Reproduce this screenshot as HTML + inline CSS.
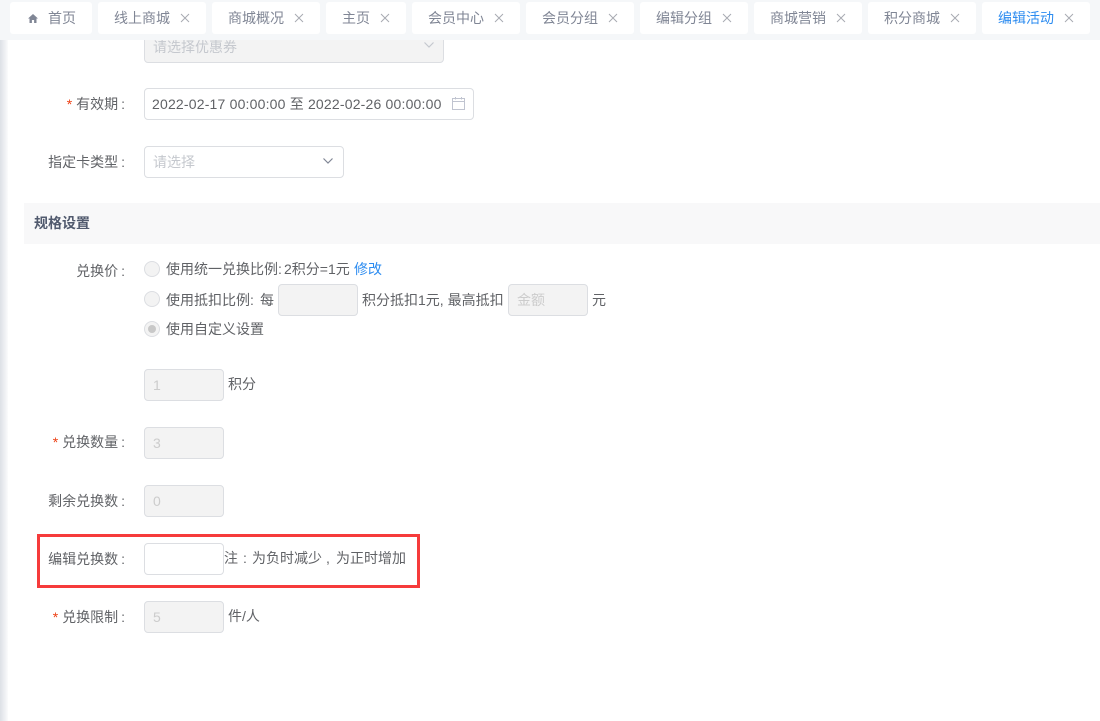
<!DOCTYPE html>
<html lang="zh">
<head>
<meta charset="utf-8">
<style>
html,body{margin:0;padding:0;width:1100px;height:721px;overflow:hidden;background:#fff}
body{position:relative;font-family:"Liberation Sans","Noto Sans CJK SC",sans-serif;font-size:14px;color:#606266}
.a{position:absolute;white-space:nowrap;line-height:20px}
.bar{position:absolute;left:0;top:0;width:1100px;height:40px;background:#f5f7f9}
.tab{position:absolute;top:2px;height:32px;background:#fff;border-radius:3px;color:#808695;font-size:14px;line-height:33px}
.tab span{position:absolute;left:16px;top:0;white-space:nowrap}
.tab svg{position:absolute;top:11px;right:16px}
.in{position:absolute;box-sizing:border-box;border:1px solid #dcdee2;border-radius:4px;height:32px;background:#fff;line-height:30px;padding-left:8px;white-space:nowrap}
.dis{background:#f3f3f3;color:#ccc}
.ph{color:#c5c8ce}
.r{position:absolute;left:144px;width:16px;height:16px;box-sizing:border-box;border:1px solid #dcdee2;border-radius:50%;background:#f3f3f3}
.star{color:#ed4014;font-family:"Liberation Sans",sans-serif}
.lab{position:absolute;right:975px;white-space:nowrap;line-height:20px}
.c{margin-left:3px}
</style>
</head>
<body>
<div class="a" style="left:0;top:40px;width:8px;height:681px;background:linear-gradient(to right,#dde0e6,#eef0f3 60%,#fbfbfc)"></div>
<div class="bar"></div>

<div class="tab" style="left:10px;width:82px">
<svg style="left:18px;top:12px;right:auto" width="10" height="9" viewBox="0 0 10 9"><path d="M5 0 0 4.500h1.500V9h2.400V6h2.200v3h2.400V4.500H10z" fill="#808695"/></svg>
<span style="left:38px">首页</span></div>
<div class="tab" style="left:98px;width:108px"><span>线上商城</span><svg width="10" height="10" viewBox="0 0 10 10"><path d="M1 1l8 8M9 1l-8 8" stroke="#a8abb2" stroke-width="1" fill="none"/></svg></div>
<div class="tab" style="left:212px;width:108px"><span>商城概况</span><svg width="10" height="10" viewBox="0 0 10 10"><path d="M1 1l8 8M9 1l-8 8" stroke="#a8abb2" stroke-width="1" fill="none"/></svg></div>
<div class="tab" style="left:326px;width:80px"><span>主页</span><svg width="10" height="10" viewBox="0 0 10 10"><path d="M1 1l8 8M9 1l-8 8" stroke="#a8abb2" stroke-width="1" fill="none"/></svg></div>
<div class="tab" style="left:412px;width:108px"><span>会员中心</span><svg width="10" height="10" viewBox="0 0 10 10"><path d="M1 1l8 8M9 1l-8 8" stroke="#a8abb2" stroke-width="1" fill="none"/></svg></div>
<div class="tab" style="left:526px;width:108px"><span>会员分组</span><svg width="10" height="10" viewBox="0 0 10 10"><path d="M1 1l8 8M9 1l-8 8" stroke="#a8abb2" stroke-width="1" fill="none"/></svg></div>
<div class="tab" style="left:640px;width:108px"><span>编辑分组</span><svg width="10" height="10" viewBox="0 0 10 10"><path d="M1 1l8 8M9 1l-8 8" stroke="#a8abb2" stroke-width="1" fill="none"/></svg></div>
<div class="tab" style="left:754px;width:108px"><span>商城营销</span><svg width="10" height="10" viewBox="0 0 10 10"><path d="M1 1l8 8M9 1l-8 8" stroke="#a8abb2" stroke-width="1" fill="none"/></svg></div>
<div class="tab" style="left:868px;width:108px"><span>积分商城</span><svg width="10" height="10" viewBox="0 0 10 10"><path d="M1 1l8 8M9 1l-8 8" stroke="#a8abb2" stroke-width="1" fill="none"/></svg></div>
<div class="tab" style="left:982px;width:108px;color:#2d8cf0"><span>编辑活动</span><svg width="10" height="10" viewBox="0 0 10 10"><path d="M1 1l8 8M9 1l-8 8" stroke="#a8abb2" stroke-width="1" fill="none"/></svg></div>

<!-- clipped select -->
<div style="position:absolute;left:8px;top:40px;width:1092px;height:30px;overflow:hidden">
<div class="in dis" style="left:136px;top:-9px;width:300px;color:#c5c8ce">请选择优惠券
<svg style="position:absolute;left:279px;top:10px" width="10" height="6" viewBox="0 0 10 6"><path d="M.5.500 5 5 9.500.500" stroke="#c5c8ce" stroke-width="1.200" fill="none"/></svg></div>
</div>

<div class="lab" style="top:94px"><span class="star">*</span> 有效期<span class="c">:</span></div>
<div class="in" style="left:144px;top:88px;width:330px;padding-left:7px;letter-spacing:.19px">2022-02-17 00:00:00 至 2022-02-26 00:00:00
<svg style="position:absolute;left:307px;top:8px" width="13" height="13" viewBox="0 0 13 13"><path d="M.500 1.500h12v11H.500zM.500 4.500h12M3.500 0v2.500M9.500 0v2.500" stroke="#c0c4d0" stroke-width="1" fill="none"/></svg></div>

<div class="lab" style="top:152px">指定卡类型<span class="c">:</span></div>
<div class="in ph" style="left:144px;top:146px;width:200px">请选择
<svg style="position:absolute;left:178px;top:11px" width="10" height="6" viewBox="0 0 10 6"><path d="M.500.500 5 5 9.500.500" stroke="#808695" stroke-width="1.200" fill="none"/></svg></div>

<div class="a" style="left:24px;top:203px;width:1076px;height:41px;background:#f8f8f9"></div>
<div class="a" style="left:34px;top:213px;font-size:14px;font-weight:bold;color:#515a6e;line-height:21px">规格设置</div>

<div class="lab" style="top:261px">兑换价<span class="c">:</span></div>
<div class="r" style="top:261px"></div>
<div class="a" style="left:166px;top:259px">使用统一兑换比例:</div>
<div class="a" style="left:284px;top:259px">2积分=1元</div>
<div class="a" style="left:354px;top:259px;color:#2d8cf0">修改</div>

<div class="r" style="top:291px"></div>
<div class="a" style="left:166px;top:290px">使用抵扣比例:</div>
<div class="a" style="left:260px;top:290px">每</div>
<div class="in dis" style="left:278px;top:284px;width:80px"></div>
<div class="a" style="left:362px;top:290px">积分抵扣1元, 最高抵扣</div>
<div class="in dis" style="left:508px;top:284px;width:80px">金额</div>
<div class="a" style="left:592px;top:290px">元</div>

<div class="r" style="top:321px"></div>
<div style="position:absolute;left:148px;top:325px;width:8px;height:8px;border-radius:50%;background:#c8c8c8"></div>
<div class="a" style="left:166px;top:319px">使用自定义设置</div>

<div class="in dis" style="left:144px;top:369px;width:80px">1</div>
<div class="a" style="left:228px;top:374px">积分</div>

<div class="lab" style="top:432px"><span class="star">*</span> 兑换数量<span class="c">:</span></div>
<div class="in dis" style="left:144px;top:427px;width:80px">3</div>

<div class="lab" style="top:491px">剩余兑换数<span class="c">:</span></div>
<div class="in dis" style="left:144px;top:485px;width:80px">0</div>

<div class="a" style="left:37px;top:534px;width:383px;height:54px;box-sizing:border-box;border:3px solid #f63b3b"></div>
<div class="lab" style="top:549px">编辑兑换数<span class="c">:</span></div>
<div class="in" style="left:144px;top:543px;width:80px"></div>
<div class="a" style="left:224px;top:548px">注</div>
<div class="a" style="left:243px;top:548px">:</div>
<div class="a" style="left:252px;top:548px">为负时减少</div>
<div class="a" style="left:326px;top:548px">,</div>
<div class="a" style="left:336px;top:548px">为正时增加</div>

<div class="lab" style="top:607px"><span class="star">*</span> 兑换限制<span class="c">:</span></div>
<div class="in dis" style="left:144px;top:601px;width:80px">5</div>
<div class="a" style="left:228px;top:606px">件/人</div>
</body>
</html>
